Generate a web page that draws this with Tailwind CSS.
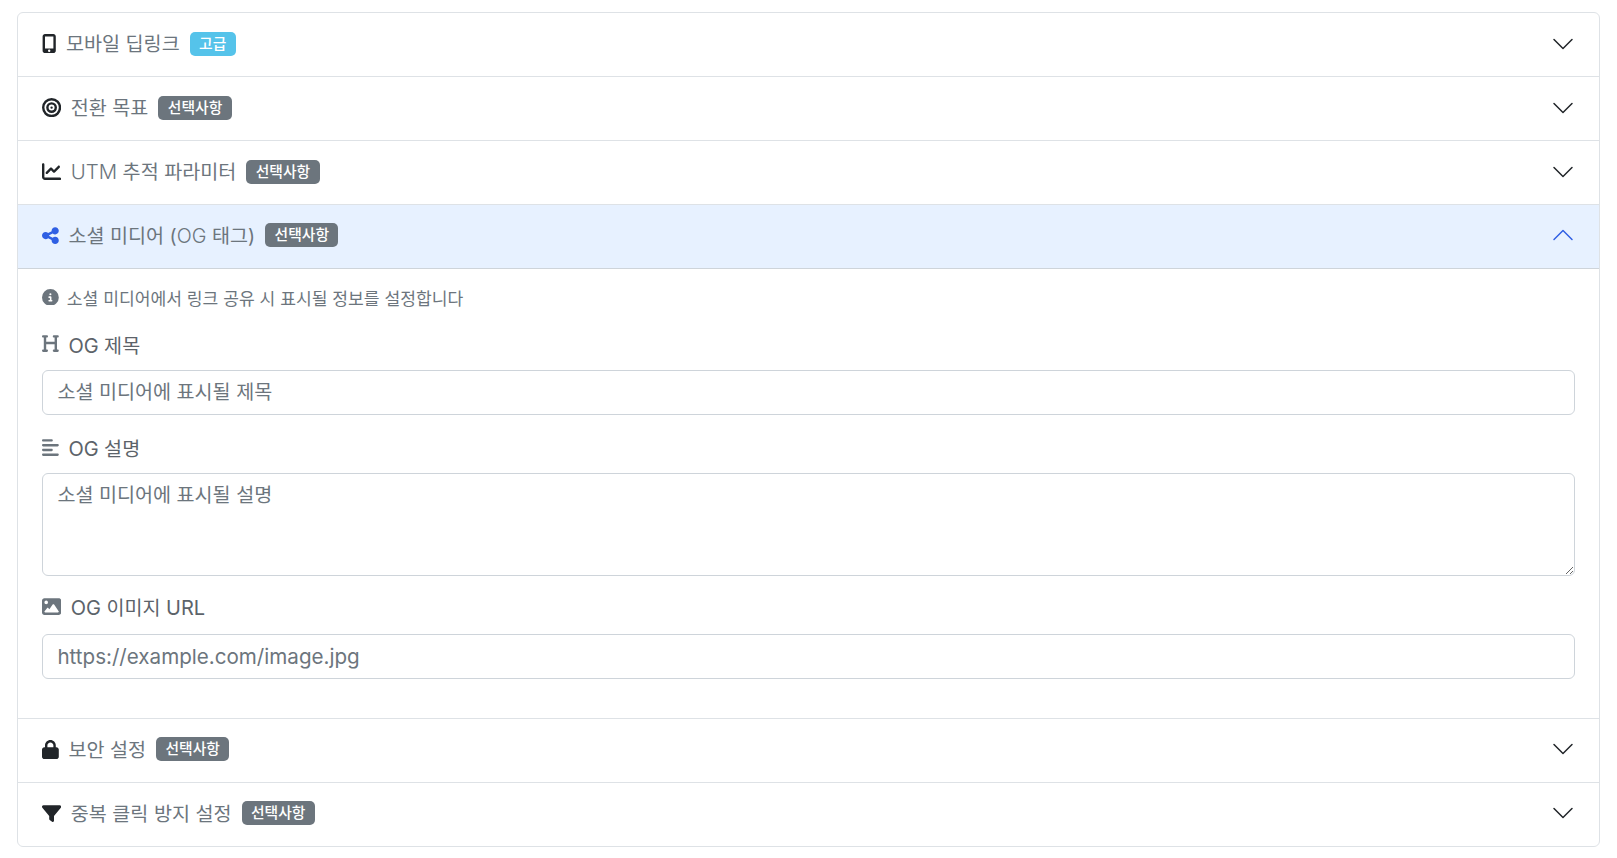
<!DOCTYPE html>
<html lang="ko">
<head>
    <meta charset="UTF-8">
    <meta name="viewport" content="width=device-width, initial-scale=1.0">
    <script src="https://cdn.jsdelivr.net/npm/@tailwindcss/browser@4"></script>
    <title>링크 옵션</title>
</head>
<body class="bg-white font-['Inter','Noto_Sans_CJK_KR',sans-serif] text-[19.6px] leading-[28.8px] text-[#6c757d]">
    <div class="pl-[17px] pr-[17.5px] pt-3">
        <div class="border border-[#dee2e6] rounded-md overflow-hidden">

            <!-- 모바일 딥링크 -->
            <div class="h-[64px] border-b border-[#dee2e6] px-6 pb-[2px] flex items-center">
                <svg class="w-[14.4px] h-[19.2px] mr-[9.6px] fill-[#212529]" viewBox="0 0 384 512"><path d="M16 64C16 28.7 44.7 0 80 0H304c35.3 0 64 28.7 64 64V448c0 35.3-28.7 64-64 64H80c-35.3 0-64-28.7-64-64V64zM224 448a32 32 0 1 0 -64 0 32 32 0 1 0 64 0zM304 64H80V384H304V64z"/></svg>
                <span class="pt-[2px]">모바일 딥링크</span>
                <span class="ml-[10px] h-6 px-[9.4px] rounded-[5px] bg-[#55c3ea] text-white text-[14.8px] font-medium leading-6">고급</span>
                <svg class="ml-auto w-6 h-6 fill-[#212529]" viewBox="0 0 16 16"><path fill-rule="evenodd" d="M1.646 4.646a.5.5 0 0 1 .708 0L8 10.293l5.646-5.647a.5.5 0 0 1 .708.708l-6 6a.5.5 0 0 1-.708 0l-6-6a.5.5 0 0 1 0-.708z"/></svg>
            </div>

            <!-- 전환 목표 -->
            <div class="h-[64px] border-b border-[#dee2e6] px-6 pb-[2px] flex items-center">
                <svg class="w-[19.2px] h-[19.2px] mr-[9.6px] fill-[#212529]" viewBox="0 0 512 512"><path d="M448 256A192 192 0 1 0 64 256a192 192 0 1 0 384 0zM0 256a256 256 0 1 1 512 0A256 256 0 1 1 0 256zm256 80a80 80 0 1 0 0-160 80 80 0 1 0 0 160zm0-224a144 144 0 1 1 0 288 144 144 0 1 1 0-288zM224 256a32 32 0 1 1 64 0 32 32 0 1 1 -64 0z"/></svg>
                <span class="pt-[2px]">전환 목표</span>
                <span class="ml-[10px] h-6 px-[9.4px] rounded-[5px] bg-[#6c757d] text-white text-[14.8px] font-medium leading-6">선택사항</span>
                <svg class="ml-auto w-6 h-6 fill-[#212529]" viewBox="0 0 16 16"><path fill-rule="evenodd" d="M1.646 4.646a.5.5 0 0 1 .708 0L8 10.293l5.646-5.647a.5.5 0 0 1 .708.708l-6 6a.5.5 0 0 1-.708 0l-6-6a.5.5 0 0 1 0-.708z"/></svg>
            </div>

            <!-- UTM -->
            <div class="h-[64px] border-b border-[#dee2e6] px-6 pb-[2px] flex items-center">
                <svg class="w-[19.2px] h-[19.2px] mr-[9.6px] fill-[#212529]" viewBox="0 0 512 512"><path d="M64 64c0-17.7-14.3-32-32-32S0 46.3 0 64V400c0 44.2 35.8 80 80 80H480c17.7 0 32-14.3 32-32s-14.3-32-32-32H80c-8.8 0-16-7.2-16-16V64zm406.6 86.6c12.5-12.5 12.5-32.8 0-45.3s-32.8-12.5-45.3 0L320 210.7l-57.4-57.4c-12.5-12.5-32.8-12.5-45.3 0l-112 112c-12.5 12.5-12.5 32.8 0 45.3s32.8 12.5 45.3 0L240 221.3l57.4 57.4c12.5 12.5 32.8 12.5 45.3 0l128-128z"/></svg>
                <span class="pt-[2px]"><span class="text-[20.4px] font-light">UTM</span> 추적 파라미터</span>
                <span class="ml-[10px] h-6 px-[9.4px] rounded-[5px] bg-[#6c757d] text-white text-[14.8px] font-medium leading-6">선택사항</span>
                <svg class="ml-auto w-6 h-6 fill-[#212529]" viewBox="0 0 16 16"><path fill-rule="evenodd" d="M1.646 4.646a.5.5 0 0 1 .708 0L8 10.293l5.646-5.647a.5.5 0 0 1 .708.708l-6 6a.5.5 0 0 1-.708 0l-6-6a.5.5 0 0 1 0-.708z"/></svg>
            </div>

            <!-- 소셜 미디어 (open) -->
            <div class="h-[63.5px] border-b border-[#ced4da] bg-[#e7f1ff] px-6 pb-[2px] flex items-center">
                <svg class="w-[16.8px] h-[19.2px] mr-[9.6px] fill-[#2f5fe3]" viewBox="0 0 448 512"><path d="M352 224c53 0 96-43 96-96s-43-96-96-96s-96 43-96 96c0 4 .2 8 .7 11.9l-94.1 47C145.4 170.2 121.9 160 96 160c-53 0-96 43-96 96s43 96 96 96c25.9 0 49.4-10.2 66.6-26.9l94.1 47c-.5 3.9-.7 7.8-.7 11.9c0 53 43 96 96 96s96-43 96-96s-43-96-96-96c-25.9 0-49.4 10.2-66.6 26.9l-94.1-47c.5-3.9 .7-7.8 .7-11.9s-.2-8-.7-11.9l94.1-47C302.6 213.8 326.1 224 352 224z"/></svg>
                <span class="pt-[2px]">소셜 미디어 (<span class="text-[19.8px] font-light">OG</span> 태그)</span>
                <span class="ml-[10px] h-6 px-[9.4px] rounded-[5px] bg-[#6c757d] text-white text-[14.8px] font-medium leading-6">선택사항</span>
                <svg class="ml-auto w-6 h-6 fill-[#2f5fe3] rotate-180" viewBox="0 0 16 16"><path fill-rule="evenodd" d="M1.646 4.646a.5.5 0 0 1 .708 0L8 10.293l5.646-5.647a.5.5 0 0 1 .708.708l-6 6a.5.5 0 0 1-.708 0l-6-6a.5.5 0 0 1 0-.708z"/></svg>
            </div>

            <div class="border-b border-[#dee2e6] px-6 pt-[17px] pb-[39px]">
                <div class="flex items-center text-[17.15px] leading-[25px] mb-[21px]">
                    <svg class="w-[16.8px] h-[16.8px] mr-2 -mt-[2px] fill-[#6c757d]" viewBox="0 0 512 512"><path d="M256 512A256 256 0 1 0 256 0a256 256 0 1 0 0 512zM216 336h24V272H216c-13.3 0-24-10.7-24-24s10.7-24 24-24h48c13.3 0 24 10.7 24 24v88h8c13.3 0 24 10.7 24 24s-10.7 24-24 24H216c-13.3 0-24-10.7-24-24s10.7-24 24-24zm40-208a32 32 0 1 1 0 64 32 32 0 1 1 0-64z"/></svg>
                    <span>소셜 미디어에서 링크 공유 시 표시될 정보를 설정합니다</span>
                </div>

                <div class="mb-[20px]">
                    <label class="flex items-center mb-[9.6px] text-[#5c636a]">
                        <svg class="w-[16.8px] h-[19.2px] mr-[9.6px] -mt-[4px] fill-[#6c757d]" viewBox="0 0 448 512"><path d="M0 64C0 46.3 14.3 32 32 32H80h48c17.7 0 32 14.3 32 32s-14.3 32-32 32H112V208H336V96H320c-17.7 0-32-14.3-32-32s14.3-32 32-32h48 48c17.7 0 32 14.3 32 32s-14.3 32-32 32H400V240 416h16c17.7 0 32 14.3 32 32s-14.3 32-32 32H368 320c-17.7 0-32-14.3-32-32s14.3-32 32-32h16V272H112V416h16c17.7 0 32 14.3 32 32s-14.3 32-32 32H80 32c-17.7 0-32-14.3-32-32s14.3-32 32-32H48V240 96H32C14.3 96 0 81.7 0 64z"/></svg>
                        <span><span class="text-[20px]">OG</span> 제목</span>
                    </label>
                    <input type="text" placeholder="소셜 미디어에 표시될 제목" class="block w-full h-[45px] border border-[#ced4da] rounded-md px-[14.4px] placeholder:text-[#6c757d] outline-none">
                </div>

                <div class="mb-[18px]">
                    <label class="flex items-center mb-[9.6px] text-[#5c636a]">
                        <svg class="w-[16.8px] h-[19.2px] mr-[9.6px] -mt-[4px] fill-[#6c757d]" viewBox="0 0 448 512"><path d="M288 64c0 17.7-14.3 32-32 32H32C14.3 96 0 81.7 0 64S14.3 32 32 32H256c17.7 0 32 14.3 32 32zm0 256c0 17.7-14.3 32-32 32H32c-17.7 0-32-14.3-32-32s14.3-32 32-32H256c17.7 0 32 14.3 32 32zM0 192c0-17.7 14.3-32 32-32H416c17.7 0 32 14.3 32 32s-14.3 32-32 32H32c-17.7 0-32-14.3-32-32zM448 448c0 17.7-14.3 32-32 32H32c-17.7 0-32-14.3-32-32s14.3-32 32-32H416c17.7 0 32 14.3 32 32z"/></svg>
                        <span><span class="text-[20px]">OG</span> 설명</span>
                    </label>
                    <textarea placeholder="소셜 미디어에 표시될 설명" class="block w-full h-[103px] border border-[#ced4da] rounded-md px-[14.4px] py-[7.2px] placeholder:text-[#6c757d] outline-none"></textarea>
                </div>

                <div>
                    <label class="flex items-center mb-[10.6px] text-[#5c636a]">
                        <svg class="w-[19.2px] h-[19.2px] mr-[9.6px] -mt-[4px] fill-[#6c757d]" viewBox="0 0 512 512"><path d="M0 96C0 60.7 28.7 32 64 32H448c35.3 0 64 28.7 64 64V416c0 35.3-28.7 64-64 64H64c-35.3 0-64-28.7-64-64V96zM323.8 202.5c-4.5-6.6-11.9-10.5-19.8-10.5s-15.4 3.9-19.8 10.5l-87 127.6L170.7 297c-4.6-5.7-11.5-9-18.7-9s-14.2 3.3-18.7 9l-64 80c-5.8 7.2-6.9 17.1-2.9 25.4s12.4 13.6 21.6 13.6h96 32H424c8.9 0 17.1-4.9 21.2-12.8s3.6-17.4-1.4-24.7l-120-176zM112 192a48 48 0 1 0 0-96 48 48 0 1 0 0 96z"/></svg>
                        <span><span class="text-[20px]">OG</span> 이미지 <span class="text-[20px]">URL</span></span>
                    </label>
                    <input type="text" placeholder="https://example.com/image.jpg" class="block w-full h-[45px] border border-[#ced4da] rounded-md px-[14.4px] text-[20.6px] placeholder:text-[#6c757d] outline-none">
                </div>
            </div>

            <!-- 보안 설정 -->
            <div class="h-[64px] border-b border-[#dee2e6] px-6 pb-[2px] flex items-center">
                <svg class="w-[16.8px] h-[19.2px] mr-[9.6px] fill-[#212529]" viewBox="0 0 448 512"><path d="M144 144v48H304V144c0-44.2-35.8-80-80-80s-80 35.8-80 80zM80 192V144C80 64.5 144.5 0 224 0s144 64.5 144 144v48h16c35.3 0 64 28.7 64 64V448c0 35.3-28.7 64-64 64H64c-35.3 0-64-28.7-64-64V256c0-35.3 28.7-64 64-64H80z"/></svg>
                <span class="pt-[2px]">보안 설정</span>
                <span class="ml-[10px] h-6 px-[9.4px] rounded-[5px] bg-[#6c757d] text-white text-[14.8px] font-medium leading-6">선택사항</span>
                <svg class="ml-auto w-6 h-6 fill-[#212529]" viewBox="0 0 16 16"><path fill-rule="evenodd" d="M1.646 4.646a.5.5 0 0 1 .708 0L8 10.293l5.646-5.647a.5.5 0 0 1 .708.708l-6 6a.5.5 0 0 1-.708 0l-6-6a.5.5 0 0 1 0-.708z"/></svg>
            </div>

            <!-- 중복 클릭 방지 설정 -->
            <div class="h-[63px] px-6 pb-[2px] flex items-center">
                <svg class="w-[19.2px] h-[19.2px] mr-[9.6px] fill-[#212529]" viewBox="0 0 512 512"><path d="M3.9 54.9C10.5 40.9 24.5 32 40 32H472c15.5 0 29.5 8.9 36.1 22.9s4.6 30.5-5.2 42.5L320 320.9V448c0 12.1-6.8 23.2-17.7 28.6s-23.8 4.3-33.5-3l-64-48c-8.1-6-12.8-15.5-12.8-25.6V320.9L9 97.3C-.7 85.4-2.8 68.8 3.9 54.9z"/></svg>
                <span class="pt-[2px]">중복 클릭 방지 설정</span>
                <span class="ml-[10px] h-6 px-[9.4px] rounded-[5px] bg-[#6c757d] text-white text-[14.8px] font-medium leading-6">선택사항</span>
                <svg class="ml-auto w-6 h-6 fill-[#212529]" viewBox="0 0 16 16"><path fill-rule="evenodd" d="M1.646 4.646a.5.5 0 0 1 .708 0L8 10.293l5.646-5.647a.5.5 0 0 1 .708.708l-6 6a.5.5 0 0 1-.708 0l-6-6a.5.5 0 0 1 0-.708z"/></svg>
            </div>

        </div>
    </div>
</body>
</html>
